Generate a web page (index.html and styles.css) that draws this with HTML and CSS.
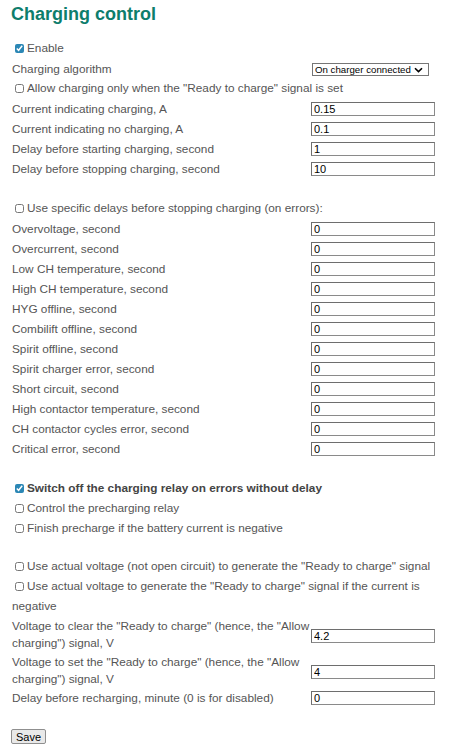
FILE: index.html
```html
<!DOCTYPE html>
<html lang="en">
<head>
    <meta charset="UTF-8">
    <meta name="viewport" content="width=device-width, initial-scale=1.0">
    <title>Charging control</title>
    <link rel="stylesheet" href="styles.css">
</head>
<body>
    <div class="page">
        <h1>Charging control</h1>

        <form id="chargingForm" class="settings">
            <div class="row check"><label><input type="checkbox" checked>Enable</label></div>
            <div class="row field">
                <label for="algorithm">Charging algorithm</label>
                <span class="select-wrap">
                    <select id="algorithm">
                        <option>On charger connected</option>
                    </select>
                    <svg class="chevron" width="9" height="6" viewBox="0 0 9 6"><path d="M1 1.2 L4.5 4.6 L8 1.2" fill="none" stroke="#000" stroke-width="1.6"/></svg>
                </span>
            </div>
            <div class="row check"><label><input type="checkbox">Allow charging only when the "Ready to charge" signal is set</label></div>
            <div class="row field"><label>Current indicating charging, A</label><input type="text" value="0.15"></div>
            <div class="row field"><label>Current indicating no charging, A</label><input type="text" value="0.1"></div>
            <div class="row field"><label>Delay before starting charging, second</label><input type="text" value="1"></div>
            <div class="row field"><label>Delay before stopping charging, second</label><input type="text" value="10"></div>

            <div class="spacer"></div>

            <div class="row check"><label><input type="checkbox">Use specific delays before stopping charging (on errors):</label></div>
            <div class="row field"><label>Overvoltage, second</label><input type="text" value="0"></div>
            <div class="row field"><label>Overcurrent, second</label><input type="text" value="0"></div>
            <div class="row field"><label>Low CH temperature, second</label><input type="text" value="0"></div>
            <div class="row field"><label>High CH temperature, second</label><input type="text" value="0"></div>
            <div class="row field"><label>HYG offline, second</label><input type="text" value="0"></div>
            <div class="row field"><label>Combilift offline, second</label><input type="text" value="0"></div>
            <div class="row field"><label>Spirit offline, second</label><input type="text" value="0"></div>
            <div class="row field"><label>Spirit charger error, second</label><input type="text" value="0"></div>
            <div class="row field"><label>Short circuit, second</label><input type="text" value="0"></div>
            <div class="row field"><label>High contactor temperature, second</label><input type="text" value="0"></div>
            <div class="row field"><label>CH contactor cycles error, second</label><input type="text" value="0"></div>
            <div class="row field"><label>Critical error, second</label><input type="text" value="0"></div>

            <div class="spacer"></div>

            <div class="row check strong"><label><input type="checkbox" checked>Switch off the charging relay on errors without delay</label></div>
            <div class="row check"><label><input type="checkbox">Control the precharging relay</label></div>
            <div class="row check"><label><input type="checkbox">Finish precharge if the battery current is negative</label></div>

            <div class="spacer small"></div>

            <div class="row check"><label><input type="checkbox">Use actual voltage (not open circuit) to generate the "Ready to charge" signal</label></div>
            <div class="row check"><label><input type="checkbox">Use actual voltage to generate the "Ready to charge" signal if the current is negative</label></div>
            <div class="row field wide"><label>Voltage to clear the "Ready to charge" (hence, the "Allow charging") signal, V</label><input type="text" value="4.2"></div>
            <div class="row field wide"><label>Voltage to set the "Ready to charge" (hence, the "Allow charging") signal, V</label><input type="text" value="4"></div>
            <div class="row field"><label>Delay before recharging, minute (0 is for disabled)</label><input type="text" value="0"></div>

            <div class="actions">
                <button type="button">Save</button>
            </div>
        </form>
    </div>
</body>
</html>
```

FILE: styles.css
```css
body {
    margin: 0;
    font-family: "Liberation Sans", Arial, sans-serif;
    font-size: 11.8px;
    color: #555;
    background-color: #fff;
}

.page {
    padding: 2px 12px 0;
}

h1 {
    margin: 0 0 0 -1px;
    font-size: 18px;
    line-height: 24px;
    color: #0d7d6c;
}

.settings {
    width: 428px;
    margin-top: 13px;
}

.row {
    display: flex;
    align-items: center;
    min-height: 20px;
}

.check label {
    line-height: 19.5px;
}

.check input {
    width: 9px;
    height: 9px;
    margin: 0 3px 0 3px;
    vertical-align: -1px;
    accent-color: #2b87b5;
}

.strong label {
    font-weight: bold;
    color: #444;
}

.field label {
    width: 299px;
    flex-shrink: 0;
    line-height: 17px;
}

.field.wide {
    align-items: flex-start;
    padding-top: 2px;
}

.field.wide input {
    margin-top: 11px;
}

.field input {
    width: 124px;
    height: 14px;
    box-sizing: border-box;
    margin: 0;
    padding: 0 2px;
    font-family: "Liberation Sans", Arial, sans-serif;
    font-size: 11px;
    color: #000;
    border: 1px solid #8a8a8a;
    border-top-color: #6e6e6e;
    border-left-color: #6e6e6e;
    border-radius: 0;
}

.select-wrap {
    position: relative;
    display: inline-block;
    margin-left: 1px;
    height: 13px;
}

.select-wrap select {
    appearance: none;
    -webkit-appearance: none;
    display: block;
    width: 117px;
    height: 13px;
    box-sizing: border-box;
    margin: 0;
    padding: 0 0 0 2px;
    font-family: "Liberation Sans", Arial, sans-serif;
    font-size: 9.7px;
    line-height: 11px;
    color: #000;
    background-color: #fff;
    border: 1px solid #767676;
    border-radius: 0;
}

.select-wrap .chevron {
    position: absolute;
    right: 6px;
    top: 4px;
    pointer-events: none;
}

.spacer {
    height: 20px;
}

.spacer.small {
    height: 18px;
}

.actions {
    padding-top: 21px;
}

.actions button {
    margin-left: -1px;
    height: 15px;
    padding: 0 4px;
    font-family: "Liberation Sans", Arial, sans-serif;
    font-size: 11px;
    line-height: 12px;
    color: #000;
    background-color: #e9e9e9;
    border: 1px solid #8f8f8f;
    border-radius: 2px;
}
```
